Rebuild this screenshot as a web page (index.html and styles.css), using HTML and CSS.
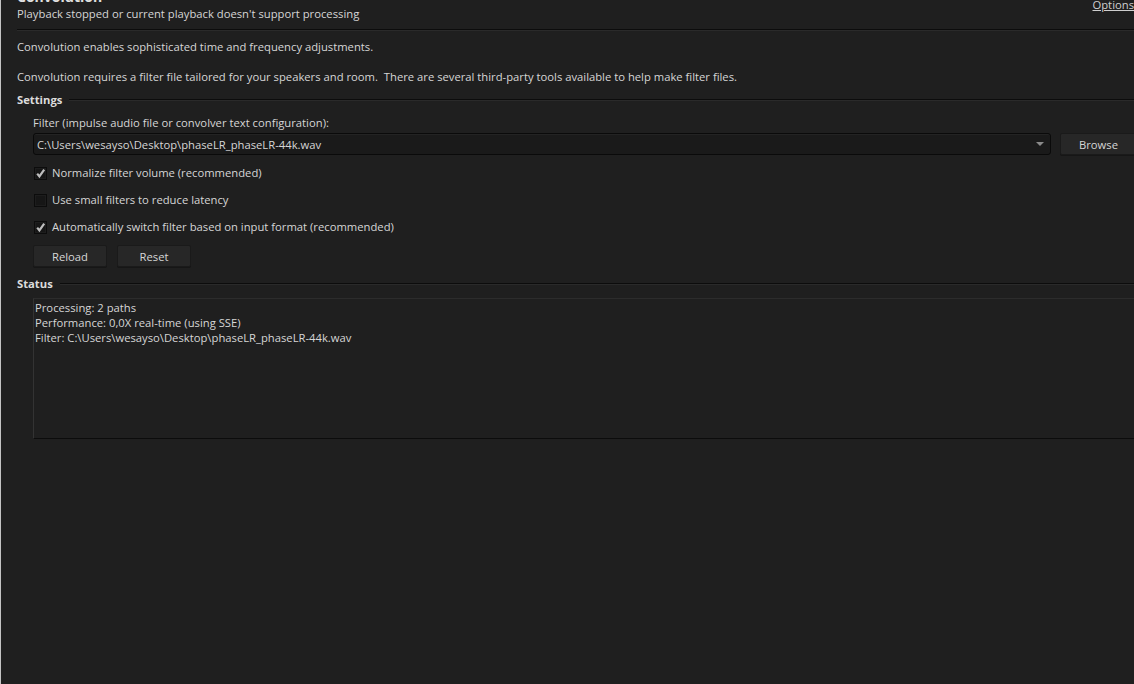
FILE: index.html
```html
<!DOCTYPE html>
<html>
<head>
  <meta charset="UTF-8">
  <link rel="stylesheet" href="styles.css">
</head>
<body>
  <div class="panel">
    <div class="header">
      <div class="header-text">
        <h1>Convolution</h1>
        <div class="subtitle">Playback stopped or current playback doesn't support processing</div>
      </div>
      <a class="options" href="#">Options</a>
    </div>
    <div class="rule"></div>

    <p class="intro">Convolution enables sophisticated time and frequency adjustments.</p>
    <p class="intro">Convolution requires a filter file tailored for your speakers and room.&nbsp; There are several third-party tools available to help make filter files.</p>

    <div class="group-title"><span>Settings</span><span class="group-line"></span></div>
    <div class="group-body">
      <div class="field-label">Filter (impulse audio file or convolver text configuration):</div>
      <div class="file-row">
        <div class="combo">
          <span>C:\Users\wesayso\Desktop\phaseLR_phaseLR-44k.wav</span>
          <span class="combo-arrow"></span>
        </div>
        <button class="btn browse">Browse</button>
      </div>

      <label class="check">
        <span class="box"><svg viewBox="0 0 13 13"><path d="M3.2 6.6 L5.4 9.4 L10.2 2.6"/></svg></span>
        Normalize filter volume (recommended)
      </label>
      <label class="check">
        <span class="box"></span>
        Use small filters to reduce latency
      </label>
      <label class="check">
        <span class="box"><svg viewBox="0 0 13 13"><path d="M3.2 6.6 L5.4 9.4 L10.2 2.6"/></svg></span>
        Automatically switch filter based on input format (recommended)
      </label>

      <div class="button-row">
        <button class="btn">Reload</button>
        <button class="btn">Reset</button>
      </div>
    </div>

    <div class="group-title status-title"><span>Status</span><span class="group-line"></span></div>
    <div class="status-box">
      <div>Processing: 2 paths</div>
      <div>Performance: 0,0X real-time (using SSE)</div>
      <div>Filter: C:\Users\wesayso\Desktop\phaseLR_phaseLR-44k.wav</div>
    </div>
  </div>
</body>
</html>
```

FILE: styles.css
```css
html, body {
  height: 100%;
}
body {
  margin: 0;
  background: #1f1f1f;
  border-left: 1px solid #c4c4c4;
  overflow: hidden;
  font-family: 'Segoe UI', 'Open Sans', sans-serif;
  font-size: 11.25px;
  color: #d6d6d6;
}
.panel {
  width: 1120px;
  padding-left: 16px;
  margin-top: -13px;
}
.header {
  display: flex;
  justify-content: space-between;
  align-items: flex-start;
}
.header h1 {
  margin: 0;
  font-size: 14px;
  line-height: 19px;
  font-weight: 700;
  color: #e0e0e0;
}
.subtitle {
  line-height: 16px;
}
.options {
  margin-top: 10px;
  margin-right: 3px;
  color: #cfcfcf;
  text-decoration: underline;
  line-height: 16px;
}
.rule {
  margin-top: 7px;
  height: 1px;
  background: #0c0c0c;
  border-bottom: 1px solid #2a2a2a;
}
.intro {
  margin: 0;
  line-height: 16px;
  padding-top: 8px;
}
.intro + .intro {
  padding-top: 14px;
}
.group-title {
  display: flex;
  align-items: center;
  gap: 7px;
  margin-top: 7px;
  line-height: 16px;
  font-weight: 700;
  color: #dcdcdc;
}
.status-title {
  margin-top: 9px;
}
.group-line {
  flex: 1;
  height: 1px;
  background: #0c0c0c;
  border-bottom: 1px solid #2a2a2a;
  margin-top: -1px;
}
.group-body {
  padding-left: 16px;
}
.field-label {
  margin-top: 7px;
  line-height: 16px;
}
.file-row {
  display: flex;
  gap: 9px;
  margin-top: 2px;
}
.combo {
  flex: 1;
  height: 20px;
  display: flex;
  align-items: center;
  justify-content: space-between;
  padding: 0 6px 0 3px;
  background: #1a1a1a;
  border: 1px solid #0a0a0a;
  border-radius: 3px;
  box-shadow: inset 0 1px 0 #232323;
}
.combo-arrow {
  width: 0;
  height: 0;
  border-left: 4px solid transparent;
  border-right: 4px solid transparent;
  border-top: 4px solid #8a8a8a;
}
.btn {
  height: 22px;
  padding: 0;
  background: #272727;
  border: 1px solid #1a1a1a;
  border-radius: 2px;
  color: #d6d6d6;
  font-family: inherit;
  font-size: 11.25px;
  box-shadow: 0 1px 0 #161616;
}
.browse {
  width: 77px;
}
.check {
  display: flex;
  align-items: center;
  gap: 5px;
  height: 16px;
  margin-top: 11px;
  line-height: 16px;
}
.check:first-of-type {
  margin-top: 10px;
}
.box {
  width: 13px;
  height: 13px;
  margin-left: 1px;
  box-sizing: border-box;
  background: #161616;
  border: 1px solid #0c0c0c;
  box-shadow: inset 0 0 0 1px #1d1d1d;
}
.box svg {
  display: block;
  width: 13px;
  height: 13px;
  margin: -1px 0 0 -1px;
}
.box svg path {
  fill: none;
  stroke: #bdbdbd;
  stroke-width: 2.2;
}
.button-row {
  display: flex;
  gap: 10px;
  margin-top: 10px;
}
.button-row .btn {
  width: 74px;
}
.status-box {
  margin: 6px 0 0 16px;
  height: 138px;
  padding: 1px 0 0 1px;
  border-top: 1px solid #2c2c2c;
  border-left: 1px solid #333;
  border-bottom: 1px solid #0c0c0c;
  line-height: 15px;
}
```
